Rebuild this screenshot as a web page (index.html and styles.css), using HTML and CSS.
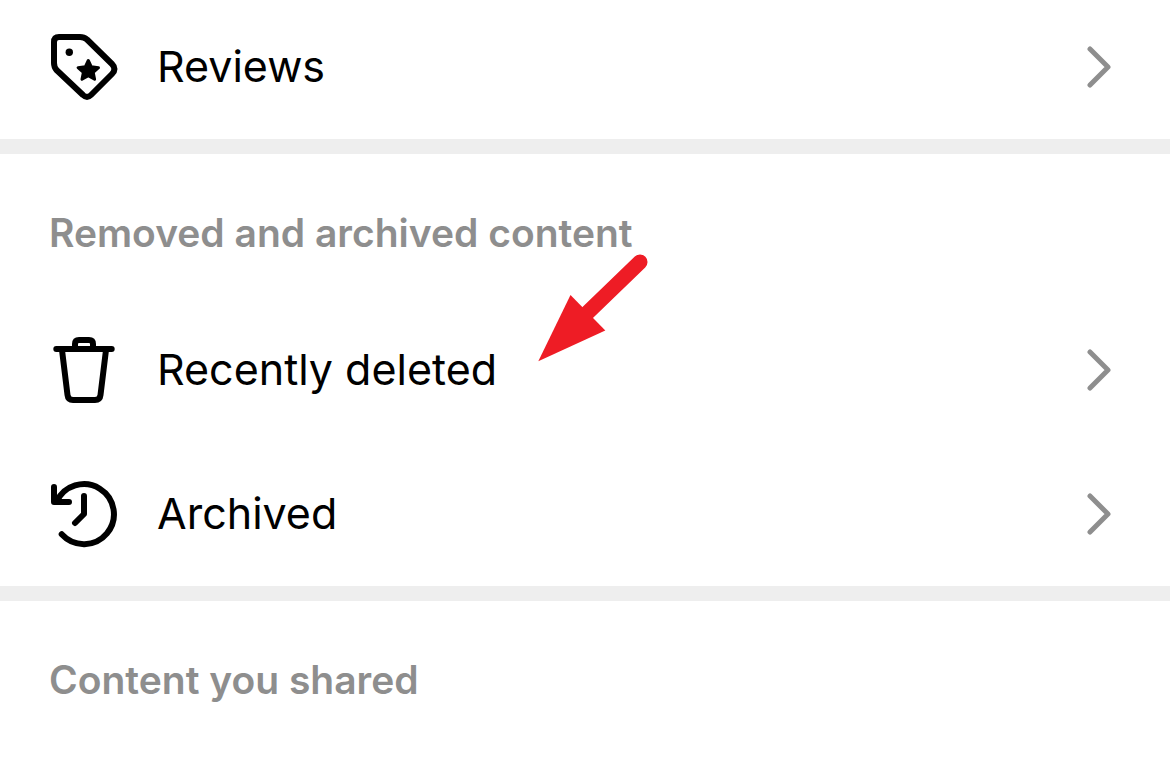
FILE: index.html
```html
<!DOCTYPE html>
<html lang="en">
<head>
    <meta charset="UTF-8">
    <meta name="viewport" content="width=device-width, initial-scale=1.0">
    <title>Your activity</title>
    <link rel="stylesheet" href="styles.css">
</head>
<body>
    <main class="menu">
        <section class="group">
            <a class="row" href="#reviews">
                <svg class="icon" viewBox="0 0 72 72" aria-hidden="true">
                    <path d="M11 6H32Q36 6 39 8.5L64 33Q69 38 64 43L43 64Q39 68 35 64L8.5 39Q6 36 6 32V11Q6 6 11 6Z"/>
                    <circle class="solid" cx="21.3" cy="21.3" r="3.7"/>
                    <path class="star" d="M40.3 29.5L43.3 35.8L50.5 36.7L45.2 41.4L46.6 48.3L40.3 44.8L34 48.3L35.4 41.4L30.1 36.7L37.3 35.8Z"/>
                </svg>
                <span class="label">Reviews</span>
                <svg class="chevron" viewBox="0 0 24 42" aria-hidden="true"><path d="M3 3L21 21L3 39"/></svg>
            </a>
        </section>

        <section class="group">
            <h2>Removed and archived content</h2>
            <a class="row" href="#deleted">
                <svg class="icon" viewBox="0 0 72 72" aria-hidden="true">
                    <path d="M8.3 15H63.7M27 15V10Q27 6 31 6H41Q45 6 45 10V15M14 16L19.5 61Q20 66 25 66H47Q52 66 52.5 61L58 16"/>
                </svg>
                <span class="label">Recently deleted</span>
                <svg class="chevron" viewBox="0 0 24 42" aria-hidden="true"><path d="M3 3L21 21L3 39"/></svg>
                <svg class="pointer" viewBox="0 0 150 140" aria-hidden="true">
                    <path class="shaft" d="M120 22L62 78"/>
                    <path class="head" d="M18.3 121.3L50.5 55L85.3 90.5Z"/>
                </svg>
            </a>
            <a class="row" href="#archived">
                <svg class="icon" viewBox="0 0 72 72" aria-hidden="true">
                    <path d="M13.7 56.3A30 30 0 1 0 8.5 24M6 9V24H21M36 18V36L27 45"/>
                </svg>
                <span class="label">Archived</span>
                <svg class="chevron" viewBox="0 0 24 42" aria-hidden="true"><path d="M3 3L21 21L3 39"/></svg>
            </a>
        </section>

        <section class="group">
            <h2>Content you shared</h2>
        </section>
    </main>
</body>
</html>
```
FILE: styles.css
```css
body {
    margin: 0;
    background: #fff;
    color: #000;
    font-family: Inter, "Liberation Sans", sans-serif;
}
.menu {
    margin-top: -5px;
}
.group + .group {
    border-top: 15px solid #eee;
}
h2 {
    margin: 0;
    padding: 55px 49px 41px;
    color: #8e8e8e;
    font-size: 39px;
    font-weight: 600;
    line-height: 48px;
}
.row {
    position: relative;
    display: flex;
    align-items: center;
    height: 144px;
    padding: 0 59px 0 48px;
    color: inherit;
    text-decoration: none;
}
.label {
    flex: 1;
    margin-left: 37px;
    padding-bottom: 2px;
    font-size: 43px;
    line-height: 56px;
}
.icon {
    width: 72px;
    height: 72px;
    fill: none;
    stroke: #000;
    stroke-width: 6;
    stroke-linecap: round;
    stroke-linejoin: round;
}
.icon .solid {
    fill: #000;
    stroke: none;
}
.icon .star {
    fill: #000;
    stroke-width: 3;
}
.chevron {
    width: 24px;
    height: 42px;
    fill: none;
    stroke: #8e8e8e;
    stroke-width: 5;
    stroke-linecap: round;
    stroke-linejoin: round;
}
.pointer {
    position: absolute;
    top: -58px;
    left: 520px;
    width: 150px;
    height: 140px;
    fill: #ee1c25;
}
.pointer .shaft {
    stroke: #ee1c25;
    stroke-width: 15;
    stroke-linecap: round;
}
```
